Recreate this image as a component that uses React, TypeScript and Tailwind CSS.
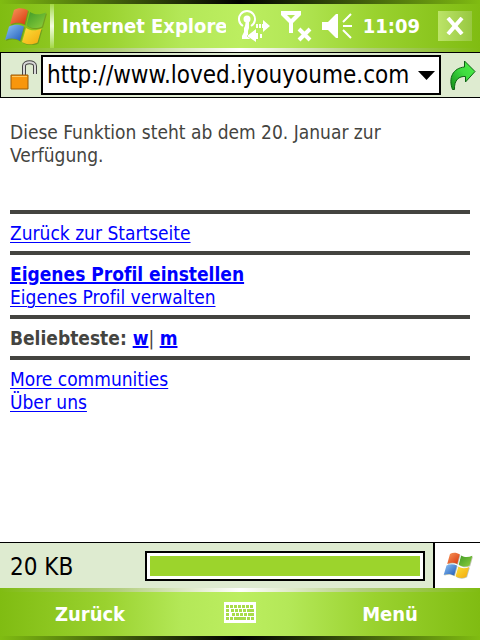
import { useState } from "react";

const FONT = "font-['DejaVu_Sans_Condensed','Noto_Sans',sans-serif] [font-variant-ligatures:none]";
const BAR = "bg-[linear-gradient(to_right,#80bc12,#9ad22f_22%,#b4e858_38%,#bcee60_50%,#b4e858_60%,#9ad22f_78%,#80bc12)]";
const SHINE = "h-1 bg-[linear-gradient(to_right,#80bc12,#b4cf80_25%,#ffffff_50%,#b4cf80_75%,#80bc12)]";
const SHADE = "h-1 bg-[linear-gradient(to_right,#80bc12,#3f5c0c_25%,#000000_50%,#3f5c0c_75%,#80bc12)]";

function WindowsFlag({ className, id }: { className: string; id: string }) {
  const panes = [
    { name: "red", from: "#f79a5c", to: "#d8330c", d: "M10 2C14-.5 19-.5 24 2.5L20.500 16.500C16 14 11 14 6 16.500Z" },
    { name: "green", from: "#3f9a28", to: "#8fd03c", d: "M26 4C31 7 36 7 42 4.500L38 18.500C33 21 27 20.500 22.500 17.500Z" },
    { name: "blue", from: "#8fc4f5", to: "#1c58b8", d: "M5 18.500C10 16 15 16 20 18.500L16 33C11 30 6 30 1 32Z" },
    { name: "yellow", from: "#fbe03a", to: "#f3a80e", d: "M22 20C27 23 32 23 37.500 20.500L33.500 34.500C28.500 37 23 37 18 34Z" },
  ];

  return (
    <svg viewBox="0 0 43 37" className={className} aria-hidden="true">
      <defs>
        {panes.map((pane) => (
          <linearGradient key={pane.name} id={`${id}-${pane.name}`} x1="0" y1="0" x2="1" y2="1">
            <stop offset="0" stopColor={pane.from} />
            <stop offset="1" stopColor={pane.to} />
          </linearGradient>
        ))}
      </defs>
      <g transform="translate(1 1)" fill="#4a5a20" opacity="0.35">
        {panes.map((pane) => (
          <path key={pane.name} d={pane.d} />
        ))}
      </g>
      {panes.map((pane) => (
        <path key={pane.name} d={pane.d} fill={`url(#${id}-${pane.name})`} />
      ))}
    </svg>
  );
}

function ConnectionIcon() {
  return (
    <svg viewBox="0 0 33 32" className="h-8 w-[33px]" fill="#fff" aria-hidden="true">
      <path d="M5 16A8 8 0 1 1 13 16" fill="none" stroke="#fff" strokeWidth="2" />
      <circle cx="9" cy="9" r="3.5" />
      <path d="M8 10h3v8l-1 3v3l2 5H4v-3l2-4v-4l1-2z" />
      <path d="M18 14h2v4h-2zM21 14h2v4h-2zM24 14h1v-4l7 6-7 6v-4h-1z" />
      <path d="M18 19v4h2v6h-2v3l-9-6z" stroke="#b4e858" strokeWidth="1" paintOrder="stroke" />
      <path d="M22 24h2v4h-2z" />
    </svg>
  );
}

function SignalIcon() {
  return (
    <svg viewBox="0 0 31 31" className="h-[31px] w-[31px]" aria-hidden="true">
      <path d="M0 0H20V4L12 12V22H8V12L0 4ZM6 4L10 8L14 4Z" fill="#fff" fillRule="evenodd" />
      <path d="M18 18 29 29M29 18 18 29" stroke="#fff" strokeWidth="4" />
    </svg>
  );
}

function SpeakerIcon() {
  return (
    <svg viewBox="0 0 31 26" className="h-[26px] w-[31px]" fill="none" stroke="#fff" aria-hidden="true">
      <path d="M0 9H6L14 1H16V25H14L6 17H0Z" fill="#fff" strokeWidth="0" />
      <path d="M21 9 29 1M21 13H30M21 17 29 25" strokeWidth="2" />
    </svg>
  );
}

function PadlockIcon() {
  return (
    <svg viewBox="0 0 27 30" className="h-[30px] w-[27px]" aria-hidden="true">
      <path d="M14 15V6C14 1 25 1 25 6V14" fill="none" stroke="#444" strokeWidth="4" />
      <path d="M14 15V6C14 1 25 1 25 6V14" fill="none" stroke="#d8d8d8" strokeWidth="2" />
      <path d="M1 15H18V29H1Z" fill="#f8960c" stroke="#9a5a08" />
      <path d="M2 16.500H17" stroke="#ffc860" />
    </svg>
  );
}

function GoIcon() {
  return (
    <svg viewBox="0 0 27 31" className="h-[31px] w-[27px]" aria-hidden="true">
      <defs>
        <linearGradient id="go-fill" x1="0" y1="1" x2="1" y2="0">
          <stop offset="0" stopColor="#128a18" />
          <stop offset="0.55" stopColor="#3fdc40" />
          <stop offset="1" stopColor="#4ef048" />
        </linearGradient>
      </defs>
      <path
        d="M15.500 1 26 11.500 16.500 22V16.500C10 16 5 20 5.500 29.500H3.500C-1 18 4 8 15.500 7Z"
        fill="url(#go-fill)"
        stroke="#0c6412"
      />
    </svg>
  );
}

function KeyboardIcon() {
  const rows = [
    [2, 6, 10, 14, 18, 22, 26],
    [2, 7, 11, 15, 19],
    [2, 8, 12, 16, 20],
  ];

  return (
    <svg viewBox="0 0 32 21" className="h-[21px] w-8" shapeRendering="crispEdges" aria-hidden="true">
      <rect width="32" height="21" rx="1" fill="#fff" />
      <g fill="#a8dc48">
        {rows.map((row, i) => row.map((x) => <rect key={`${i}-${x}`} x={x} y={3 + i * 4} width="3" height="3" />))}
        <path d="M23 7h7v3h-7zM24 11h6v3h-6zM2 15h3v3H2zM6 15h3v3H6zM10 15h12v3H10zM23 15h3v3h-3zM27 15h3v3h-3z" />
      </g>
    </svg>
  );
}

function TitleBar() {
  return (
    <header>
      <div className={SHADE} />
      <div className={`flex h-11 items-center ${BAR}`}>
        <button type="button" aria-label="Start" className="ml-1 shrink-0">
          <WindowsFlag id="start" className="h-[37px] w-[43px]" />
        </button>
        <div className="ml-[3px] h-full w-1 shrink-0 bg-linear-to-b from-[#a4d840] via-[#f4fce0] to-[#a4d840]" />
        <h1 className="ml-2 min-w-0 flex-1 overflow-hidden text-xl font-bold whitespace-nowrap text-white">
          Internet Explorer
        </h1>
        <div className="ml-3 flex shrink-0 items-center gap-[10px]">
          <ConnectionIcon />
          <SignalIcon />
          <SpeakerIcon />
        </div>
        <time className="ml-[10px] shrink-0 text-xl font-bold text-white">11:09</time>
        <button
          type="button"
          aria-label="Schließen"
          className="mr-2 ml-[18px] flex h-[30px] w-[34px] shrink-0 items-center justify-center bg-linear-to-r from-[#bce468] to-[#98c840]"
        >
          <svg viewBox="0 0 18 18" className="size-[18px]" aria-hidden="true">
            <path d="M2 1 16 17M16 1 2 17" stroke="#fff" strokeWidth="4" />
          </svg>
        </button>
      </div>
      <div className={SHINE} />
    </header>
  );
}

function AddressBar() {
  const [url, setUrl] = useState("http://www.loved.iyouyoume.com");

  return (
    <form
      className="flex items-center border-y border-l border-black bg-[#deebd0] py-[2px]"
      onSubmit={(e) => e.preventDefault()}
    >
      <div className="flex w-10 shrink-0 justify-end pr-1">
        <PadlockIcon />
      </div>
      <div className="flex h-10 min-w-0 flex-1 items-center border-2 border-black bg-white">
        <input
          type="text"
          aria-label="Adresse"
          value={url}
          onChange={(e) => setUrl(e.target.value)}
          className="h-full min-w-0 flex-1 pl-1 text-2xl text-black outline-none"
        />
        <button type="button" aria-label="Verlauf" className="px-1">
          <svg viewBox="0 0 17 9" className="h-[9px] w-[17px]" aria-hidden="true">
            <path d="M0 0H17L8.500 9Z" />
          </svg>
        </button>
      </div>
      <button type="submit" aria-label="Wechseln zu" className="mr-1 ml-2 shrink-0">
        <GoIcon />
      </button>
    </form>
  );
}

function Rule() {
  return <hr className="mt-[6px] mb-2 h-1 border-0 bg-[#444440]" />;
}

function PageLink({ children, bold = false }: { children: string; bold?: boolean }) {
  return (
    <a
      href="#"
      className={`text-[#0000ff] underline ${bold ? "font-bold decoration-2 underline-offset-1" : "decoration-1 underline-offset-2"}`}
    >
      {children}
    </a>
  );
}

export default function App() {
  return (
    <div className={`flex min-h-screen flex-col bg-white ${FONT}`}>
      <TitleBar />
      <AddressBar />

      <main className="flex-1 px-[10px] pt-[23px] text-[19px] leading-[23px] text-[#444440]">
        <p className="mb-[43px]">Diese Funktion steht ab dem 20. Januar zur Verfügung.</p>
        <hr className="mb-2 h-1 border-0 bg-[#444440]" />
        <p>
          <PageLink>Zurück zur Startseite</PageLink>
        </p>
        <Rule />
        <p>
          <PageLink bold>Eigenes Profil einstellen</PageLink>
        </p>
        <p>
          <PageLink>Eigenes Profil verwalten</PageLink>
        </p>
        <Rule />
        <p>
          <b>Beliebteste: </b>
          <PageLink bold>w</PageLink>| <PageLink bold>m</PageLink>
        </p>
        <Rule />
        <p>
          <PageLink>More communities</PageLink>
        </p>
        <p>
          <PageLink>Über uns</PageLink>
        </p>
      </main>

      <div className="flex h-[46px] items-stretch border-t border-black bg-[#deebd0]">
        <span className="flex w-[145px] items-center pt-[3px] pl-[10px] text-2xl text-black">20 KB</span>
        <div className="mt-2 mr-2 mb-[7px] flex-1 border-2 border-black bg-white p-[3px]">
          <div className="h-full bg-[#9cd42c]" />
        </div>
        <div className="flex w-[47px] items-center justify-center border-l-2 border-black bg-white">
          <WindowsFlag id="throbber" className="h-[27px] w-[30px]" />
        </div>
      </div>

      <footer>
        <div className={SHINE} />
        <div className={`flex h-11 items-center text-xl font-bold text-white ${BAR}`}>
          <button type="button" className="flex-1 pr-11">
            Zurück
          </button>
          <button type="button" aria-label="Tastatur" className="shrink-0 pb-[3px]">
            <KeyboardIcon />
          </button>
          <button type="button" className="flex-1 pl-11">
            Menü
          </button>
        </div>
        <div className={SHADE} />
      </footer>
    </div>
  );
}
